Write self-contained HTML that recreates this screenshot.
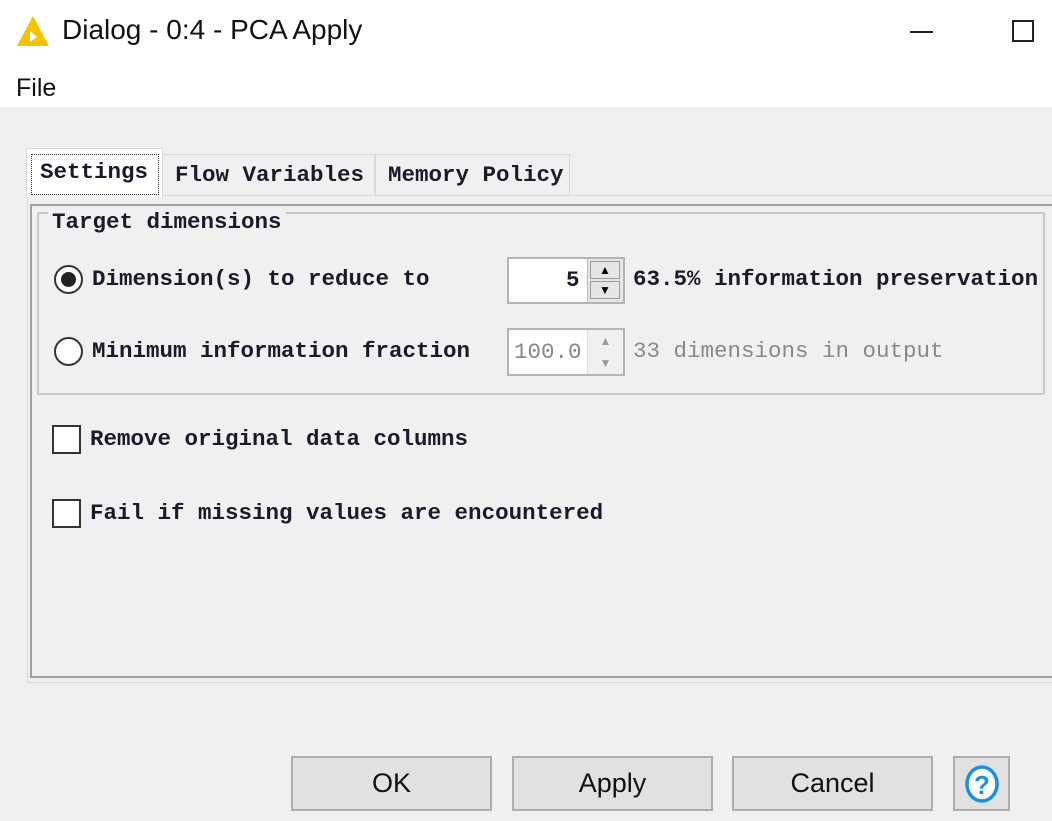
<!DOCTYPE html>
<html><head><meta charset="utf-8"><style>
*{margin:0;padding:0;box-sizing:border-box}
body{width:1052px;height:815px;background:#f0f0f0;position:relative;overflow:hidden;font-family:"Liberation Sans",sans-serif}
.a{position:absolute}
.m{font-family:"Liberation Mono",monospace;font-weight:bold;font-size:22.5px;color:#1a1a2a;white-space:pre;line-height:24px}
.btn{position:absolute;top:756px;height:55px;background:#e1e1e1;border:2px solid #adadad;font-size:27px;color:#111;text-align:center;line-height:51px}
</style></head><body>
<div class="a" style="left:0;top:0;width:1052px;height:107px;background:#fff"></div>
<svg class="a" style="left:16px;top:15px" width="34" height="32"><polygon points="17,1 33,31 1,31" fill="#f5c400"/><polygon points="14,16 21,22 14,27" fill="#fff"/></svg>
<div class="a" style="left:62px;top:14px;font-size:28px;color:#111">Dialog - 0:4 - PCA Apply</div>
<div class="a" style="left:910px;top:31px;width:23px;height:2px;background:#222"></div>
<div class="a" style="left:1012px;top:20px;width:22px;height:22px;border:2px solid #222"></div>
<div class="a" style="left:16px;top:74px;font-size:25px;color:#111">File</div>

<!-- tabs -->
<div class="a" style="left:162px;top:154px;width:213px;height:42px;border:1px solid #d9d9d9;background:#f0f0f0"></div>
<div class="a" style="left:375px;top:154px;width:195px;height:42px;border:1px solid #d9d9d9;background:#f0f0f0"></div>
<div class="a m" style="left:175px;top:163px">Flow Variables</div>
<div class="a m" style="left:388px;top:163px">Memory Policy</div>
<div class="a" style="left:27px;top:195px;width:1030px;height:488px;border:1px solid #d9d9d9;background:#f0f0f0"></div>
<div class="a" style="left:30px;top:204px;width:1030px;height:474px;border-top:2px solid #a0a0a0;border-left:2px solid #a0a0a0;border-bottom:2px solid #a0a0a0"></div>
<div class="a" style="left:26px;top:148px;width:137px;height:49px;background:#fff;border:1px solid #d9d9d9;border-bottom:none"></div>
<div class="a" style="left:31px;top:154px;width:128px;height:41px;border:1px dotted #333"></div>
<div class="a m" style="left:40px;top:160px">Settings</div>

<!-- group -->
<div class="a" style="left:37px;top:212px;width:1008px;height:183px;border:2px solid #c8c8c8;border-radius:2px"></div>
<div class="a m" style="left:48px;top:210px;background:#f0f0f0;padding:0 4px">Target dimensions</div>

<div class="a" style="left:54px;top:265px;width:29px;height:29px;border-radius:50%;border:2px solid #333;background:#fff"></div>
<div class="a" style="left:61px;top:272px;width:15px;height:15px;border-radius:50%;background:#222"></div>
<div class="a m" style="left:92px;top:267px">Dimension(s) to reduce to</div>
<div class="a" style="left:54px;top:337px;width:29px;height:29px;border-radius:50%;border:2px solid #333;background:#fff"></div>
<div class="a m" style="left:92px;top:339px">Minimum information fraction</div>

<div class="a" style="left:507px;top:257px;width:118px;height:47px;border:2px solid #b4b4b4;background:#fff"></div>
<div class="a" style="left:578px;top:259px;width:2px;height:43px;background:#fff"></div>
<div class="a" style="left:587px;top:259px;width:36px;height:43px;background:#e6e6e6;border-left:1px solid #bbb"></div>
<div class="a" style="left:590px;top:261px;width:30px;height:18px;border:1px solid #999;background:#e6e6e6;font-size:12px;text-align:center;line-height:16px">&#9650;</div>
<div class="a" style="left:590px;top:281px;width:30px;height:18px;border:1px solid #999;background:#e6e6e6;font-size:12px;text-align:center;line-height:16px">&#9660;</div>
<div class="a m" style="left:566px;top:268px">5</div>
<div class="a m" style="left:633px;top:267px">63.5% information preservation</div>

<div class="a" style="left:507px;top:328px;width:118px;height:48px;border:2px solid #b4b4b4;background:#fff"></div>
<div class="a" style="left:587px;top:330px;width:36px;height:44px;background:#f0f0f0;border-left:1px solid #ddd;color:#999;font-size:12px;text-align:center;line-height:22px">&#9650;<br>&#9660;</div>
<div class="a m" style="left:514px;top:340px;color:#888;font-weight:normal">100.0</div>
<div class="a m" style="left:633px;top:339px;color:#888;font-weight:normal">33 dimensions in output</div>

<div class="a" style="left:52px;top:425px;width:29px;height:29px;border:2px solid #333;background:#fff"></div>
<div class="a m" style="left:90px;top:427px">Remove original data columns</div>
<div class="a" style="left:52px;top:499px;width:29px;height:29px;border:2px solid #333;background:#fff"></div>
<div class="a m" style="left:90px;top:501px">Fail if missing values are encountered</div>

<div class="btn" style="left:291px;width:201px">OK</div>
<div class="btn" style="left:512px;width:201px">Apply</div>
<div class="btn" style="left:732px;width:201px">Cancel</div>
<div class="btn" style="left:953px;width:57px"><svg width="36" height="40" style="margin-top:6px"><ellipse cx="18" cy="20" rx="15" ry="17" fill="#fff" stroke="#1e8fe0" stroke-width="3.5"/><text x="18" y="30" text-anchor="middle" font-family="Liberation Sans" font-weight="bold" font-size="26" fill="#1e8fe0">?</text></svg></div>
</body></html>
